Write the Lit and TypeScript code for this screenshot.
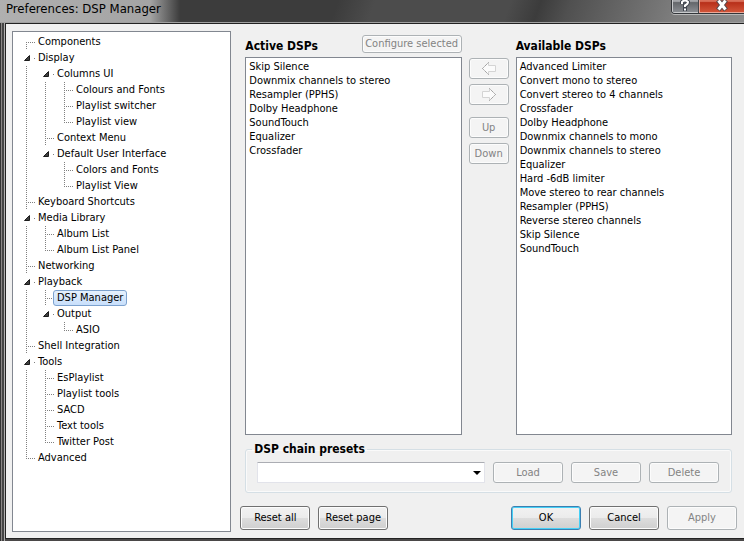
import { LitElement, html, css, svg, nothing } from "lit";
import { customElement } from "lit/decorators.js";
import { classMap } from "lit/directives/class-map.js";

interface TreeNode {
  label: string;
  selected?: boolean;
  children?: TreeNode[];
}

const TREE: TreeNode[] = [
  { label: "Components" },
  {
    label: "Display",
    children: [
      {
        label: "Columns UI",
        children: [{ label: "Colours and Fonts" }, { label: "Playlist switcher" }, { label: "Playlist view" }],
      },
      { label: "Context Menu" },
      { label: "Default User Interface", children: [{ label: "Colors and Fonts" }, { label: "Playlist View" }] },
    ],
  },
  { label: "Keyboard Shortcuts" },
  { label: "Media Library", children: [{ label: "Album List" }, { label: "Album List Panel" }] },
  { label: "Networking" },
  {
    label: "Playback",
    children: [{ label: "DSP Manager", selected: true }, { label: "Output", children: [{ label: "ASIO" }] }],
  },
  { label: "Shell Integration" },
  {
    label: "Tools",
    children: [
      { label: "EsPlaylist" },
      { label: "Playlist tools" },
      { label: "SACD" },
      { label: "Text tools" },
      { label: "Twitter Post" },
    ],
  },
  { label: "Advanced" },
];

const ACTIVE = [
  "Skip Silence",
  "Downmix channels to stereo",
  "Resampler (PPHS)",
  "Dolby Headphone",
  "SoundTouch",
  "Equalizer",
  "Crossfader",
];

const AVAILABLE = [
  "Advanced Limiter",
  "Convert mono to stereo",
  "Convert stereo to 4 channels",
  "Crossfader",
  "Dolby Headphone",
  "Downmix channels to mono",
  "Downmix channels to stereo",
  "Equalizer",
  "Hard -6dB limiter",
  "Move stereo to rear channels",
  "Resampler (PPHS)",
  "Reverse stereo channels",
  "Skip Silence",
  "SoundTouch",
];

@customElement("pref-tree")
class PrefTree extends LitElement {
  static styles = css`
    :host {
      display: block;
      box-sizing: border-box;
      background: #fff;
      border: 1px solid #828790;
      padding: 2px;
    }
    ul {
      list-style: none;
      margin: 0;
      padding: 0;
    }
    .row {
      display: flex;
      height: 16px;
      line-height: 14px;
      white-space: nowrap;
    }
    .cell {
      flex: none;
      width: 19px;
      height: 16px;
      overflow: visible;
    }
    .guide {
      fill: none;
      stroke: #808080;
      stroke-dasharray: 1 1;
      shape-rendering: crispEdges;
    }
    .arrow {
      fill: #404040;
      stroke: #1c1c1c;
    }
    .label {
      border: 1px solid transparent;
      border-radius: 3px;
      padding: 0 3px;
    }
    .selected {
      border-color: #7da2ce;
      background: linear-gradient(#e6f1fd, #c8dffb);
    }
  `;

  private own(hasKids: boolean, first: boolean, last: boolean) {
    return html`<svg class="cell" viewBox="0 0 19 16" aria-hidden="true">
      ${hasKids
        ? svg`<path class="arrow" d="M14.5 5.5V10.5H9.5Z" stroke-linejoin="round"/><path class="guide" d="M19 8.5h1"/>`
        : svg`<path class="guide" d=${`M11.5 ${first ? 8 : 0}V${last ? 9 : 16}`}/><path class="guide" d="M13 8.5h7"/>`}
    </svg>`;
  }

  private line(shown: boolean) {
    return html`<svg class="cell" viewBox="0 0 19 16" aria-hidden="true">
      ${shown ? svg`<path class="guide" d="M11.5 0V16"/>` : nothing}
    </svg>`;
  }

  private branch(nodes: TreeNode[], trail: boolean[]): unknown {
    return nodes.map((node, i) => {
      const last = i === nodes.length - 1;
      const kids = node.children ?? [];
      return html`<li role="treeitem" aria-selected=${node.selected ? "true" : "false"}>
        <div class="row">
          ${trail.map((t) => this.line(t))}${this.own(kids.length > 0, i === 0 && trail.length === 0, last)}
          <span class=${classMap({ label: true, selected: !!node.selected })}>${node.label}</span>
        </div>
        ${kids.length ? html`<ul role="group">${this.branch(kids, [...trail, !last])}</ul>` : nothing}
      </li>`;
    });
  }

  render() {
    return html`<ul role="tree" aria-label="Preferences pages">${this.branch(TREE, [])}</ul>`;
  }
}

@customElement("app-root")
class AppRoot extends LitElement {
  static styles = css`
    :host {
      display: flex;
      flex-direction: column;
      box-sizing: border-box;
      min-height: 100vh;
      font: 11px/14px "DejaVu Sans Condensed", "DejaVu Sans", sans-serif;
      color: #000;
      background: #4a4848;
    }
    .titlebar {
      box-sizing: border-box;
      display: flex;
      justify-content: space-between;
      align-items: flex-start;
      height: 23px;
      padding-left: 6px;
      border-bottom: 1px solid #a0a0a0;
      background:
        linear-gradient(90deg, #b0b0b0, #a4a4a4 150px, transparent 180px),
        linear-gradient(110deg, #3c3c3c 45%, #4c4c4c 50%, #4c4c4c 68%, #3c3c3c 72%, #505050 76%, #7c7c7c 90%, #8c8c8c);
    }
    h1 {
      margin: 0;
      font-size: 13px;
      font-weight: 400;
      line-height: 17px;
      white-space: nowrap;
    }
    .caption {
      display: flex;
      border: 1px solid #33363a;
      border-width: 0 0 1px 1px;
      border-radius: 0 0 0 4px;
      box-shadow: 0 1px 0 #b8b8b8;
      overflow: hidden;
    }
    .caption button {
      display: flex;
      justify-content: center;
      align-items: flex-start;
      padding: 0;
      width: 27px;
      height: 13px;
      border: 0;
      border-right: 1px solid #44474c;
      background: linear-gradient(#a4a6aa 10%, #64676b 20%, #8e9196);
      box-shadow: inset 1px -1px 0 #c8cacc;
    }
    .caption .close {
      width: 45px;
      border-right: 0;
      background: linear-gradient(#d9705a 10%, #b8301a 20%, #d4583c);
      box-shadow: inset 1px -1px 0 #eba898;
    }
    .frame {
      flex: 1;
      display: flex;
      flex-direction: column;
      padding: 0 0 2px 5px;
      background: linear-gradient(90deg, #333 1px, #8a8686 1px 2px, #444 2px 4px, #b0aeae 4px 5px, #4a4848 5px);
    }
    .client {
      flex: 1;
      display: grid;
      grid-template-columns: minmax(180px, 219fr) minmax(400px, 496fr);
      gap: 9px;
      padding: 7px 7px 6px 6px;
      border: 1px solid #222;
      border-right: 0;
      background: #f0f0f0;
    }
    .page {
      display: flex;
      flex-direction: column;
    }
    .dsps {
      flex: 1;
      display: grid;
      grid-template-columns: 1fr 40px 1fr;
      grid-template-rows: 20px 1fr;
      gap: 2px 7px;
      margin: 4px 5px 0;
    }
    .head {
      display: flex;
      justify-content: space-between;
      align-items: flex-start;
      white-space: nowrap;
    }
    .mid {
      grid-column: 2;
      grid-row: 2;
      display: flex;
      flex-direction: column;
      gap: 5px;
      padding-top: 1px;
    }
    .up {
      margin-top: 7px;
    }
    .title,
    legend {
      font-size: 12px;
      line-height: 16px;
      font-weight: 700;
    }
    .title {
      align-self: flex-end;
      line-height: 18px;
    }
    .list {
      appearance: none;
      box-sizing: border-box;
      width: 100%;
      height: 100%;
      min-height: 200px;
      margin: 0;
      padding: 2px 0;
      border: 1px solid #828790;
      border-radius: 0;
      background: #fff;
      color: #000;
      font: inherit;
      overflow: hidden;
      outline: 0;
    }
    .list option {
      display: block;
      box-sizing: border-box;
      height: 14px;
      min-height: 14px;
      line-height: 14px;
      padding: 0 3px;
    }
    .btn {
      box-sizing: border-box;
      width: 70px;
      height: 24px;
      padding: 0;
      border: 1px solid #707070;
      border-radius: 3px;
      background: linear-gradient(#f2f2f2, #ebebeb 50%, #dddddd 50%, #cfcfcf);
      box-shadow: inset 0 0 0 1px #fcfcfc;
      color: #000;
      font: inherit;
      white-space: nowrap;
    }
    .btn:disabled {
      border-color: #adb2b5;
      background: #f4f4f4;
      color: #838383;
    }
    .btn.default {
      border-color: #3c7fb1;
      box-shadow: inset 0 0 0 1px #46d0f6;
    }
    .btn.small {
      height: 21px;
    }
    .mid .btn {
      width: 100%;
    }
    .btn.configure {
      width: 100px;
      height: 18px;
    }
    .icon {
      display: block;
      margin: 0 auto;
    }
    fieldset {
      display: flex;
      gap: 8px;
      min-width: 0;
      margin: 6px 5px 0;
      padding: 5px 12px 9px 11px;
      border: 1px solid #d5dfe5;
      border-radius: 3px;
      box-shadow: inset 0 0 0 1px #fafafa;
    }
    legend {
      margin-left: -5px;
      padding: 0 2px;
    }
    .combo {
      position: relative;
      flex: 1;
      display: flex;
    }
    .combo select {
      appearance: none;
      box-sizing: border-box;
      width: 100%;
      height: 21px;
      padding: 0 18px 0 4px;
      border: 1px solid #e2e3ea;
      border-top-color: #abadb3;
      border-radius: 1px;
      background: #fff;
      font: inherit;
    }
    .combo svg {
      position: absolute;
      right: 4px;
      top: 9px;
      pointer-events: none;
    }
    .actions {
      display: flex;
      gap: 8px;
      margin-top: 13px;
      padding-bottom: 2px;
    }
    .spacer {
      flex: 1;
    }
  `;

  private list(id: string, items: string[]) {
    return html`<select class="list" id=${id} multiple>${items.map((t) => html`<option>${t}</option>`)}</select>`;
  }

  private arrow(flip: boolean) {
    return html`<svg class="icon" width="16" height="15" viewBox="0 0 16 15" aria-hidden="true">
      <path d=${flip ? "M14.5 7.5 8.5 1.5V4.5H1.5V10.5H8.5V13.5Z" : "M1.5 7.5 7.5 1.5V4.5H14.5V10.5H7.5V13.5Z"}
        fill="#fbfbfb" stroke="#d4d4d4" />
      <path d=${flip ? "M8.5 1.5 14.5 7.5 8.5 13.5" : "M7.5 1.5 1.5 7.5 7.5 13.5"}
        fill="none" stroke="#8c8c8c" stroke-dasharray="1 1" /></svg>`;
  }

  render() {
    return html`
      <header class="titlebar">
        <h1>Preferences: DSP Manager</h1>
        <div class="caption">
          <button aria-label="Help">
            <svg width="12" height="12" viewBox="0 0 12 12" fill="none" aria-hidden="true">
              <path d="M3 4V2Q6-1 9 2 9 4 6 5.500V7.500M6 7.500v3.500" stroke="#404650" stroke-width="4" />
              <path d="M3 4V2Q6-1 9 2 9 4 6 5.500V7M6 8.500v2" stroke="#fff" stroke-width="2" />
            </svg>
          </button>
          <button class="close" aria-label="Close">
            <svg width="12" height="12" viewBox="0 0 12 12" fill="none" aria-hidden="true">
              <path d="M2 0 10 10M10 0 2 10" stroke="#54484c" stroke-width="5" />
              <path d="M2.500 .5 9.500 9.500M9.500 .5 2.500 9.500" stroke="#fff" stroke-width="3" />
            </svg>
          </button>
        </div>
      </header>
      <div class="frame">
        <main class="client">
          <pref-tree></pref-tree>
          <div class="page">
            <div class="dsps">
              <div class="head">
                <label class="title" for="active">Active DSPs</label>
                <button class="btn configure" disabled>Configure selected</button>
              </div>
              <span></span>
              <div class="head"><label class="title" for="available">Available DSPs</label></div>
              ${this.list("active", ACTIVE)}
              <div class="mid">
                <button class="btn small" disabled aria-label="Add">${this.arrow(false)}</button>
                <button class="btn small" disabled aria-label="Remove">${this.arrow(true)}</button>
                <button class="btn small up" disabled>Up</button>
                <button class="btn small" disabled>Down</button>
              </div>
              ${this.list("available", AVAILABLE)}
            </div>
            <fieldset>
              <legend>DSP chain presets</legend>
              <div class="combo">
                <select aria-label="DSP chain presets"></select>
                <svg width="8" height="4" viewBox="0 0 8 4" aria-hidden="true"><path d="M0 0H8L4 4Z" /></svg>
              </div>
              <button class="btn small" disabled>Load</button>
              <button class="btn small" disabled>Save</button>
              <button class="btn small" disabled>Delete</button>
            </fieldset>
            <div class="actions">
              <button class="btn">Reset all</button>
              <button class="btn">Reset page</button>
              <span class="spacer"></span>
              <button class="btn default">OK</button>
              <button class="btn">Cancel</button>
              <button class="btn" disabled>Apply</button>
            </div>
          </div>
        </main>
      </div>
    `;
  }
}
